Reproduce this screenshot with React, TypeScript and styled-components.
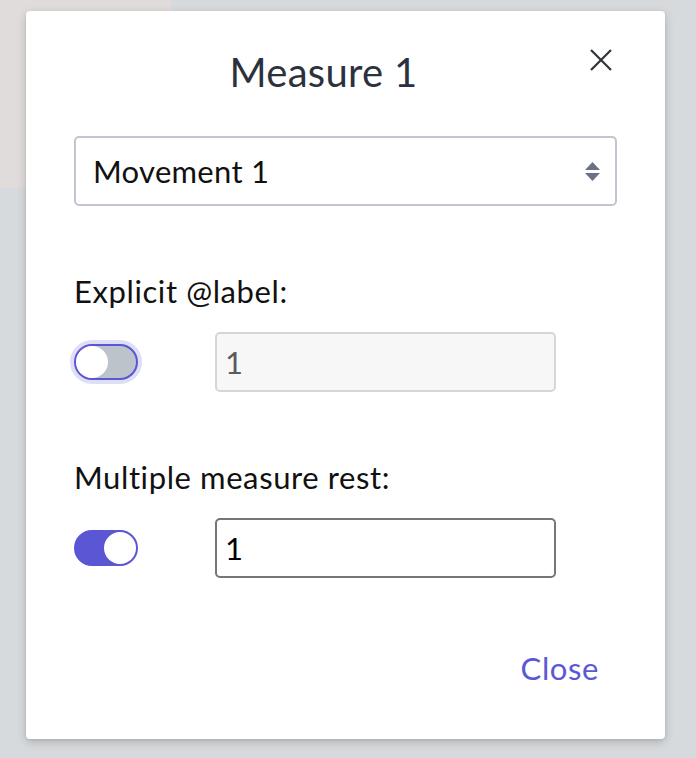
import React, { useState } from "react";
import styled, { createGlobalStyle } from "styled-components";

const GlobalStyle = createGlobalStyle`
  html, body {
    margin: 0;
    padding: 0;
  }
  body {
    background: #d6dadd;
    font-family: Lato, "Noto Sans", sans-serif;
  }
`;

const Page = styled.div`
  position: relative;
  width: 696px;
  height: 758px;
  overflow: hidden;
  background: #d6dadd;
`;

const BehindPanel = styled.div`
  width: 171px;
  height: 187px;
  background: #e0dcdb;
  border-right: 1px solid #e6d6d6;
  border-bottom: 1px solid #e6d6d6;
`;

const Modal = styled.div`
  position: absolute;
  left: 26px;
  top: 11px;
  width: 639px;
  height: 728px;
  box-sizing: border-box;
  padding: 0 48px;
  background: #fff;
  border-radius: 4px;
  box-shadow: 0 3px 10px rgba(0, 0, 0, 0.18), 0 1px 3px rgba(0, 0, 0, 0.08);
  display: flex;
  flex-direction: column;
`;

const Header = styled.div`
  display: flex;
  align-items: flex-start;
  margin-top: 37px;
`;

const Title = styled.h2`
  flex: 1;
  margin: 0;
  text-align: center;
  font-size: 40px;
  line-height: 48px;
  font-weight: 400;
  letter-spacing: 0.3px;
  color: #2c323d;
`;

const CloseIcon = styled.button`
  width: 44px;
  height: 34px;
  margin-top: -5px;
  padding: 0 0 0 16px;
  border: none;
  background: none;
  display: flex;
  align-items: center;
  justify-content: flex-start;
  cursor: pointer;
`;

const SelectBox = styled.div`
  margin-top: 40px;
  height: 70px;
  box-sizing: border-box;
  border: 2px solid #c2c5ce;
  border-radius: 5px;
  display: flex;
  align-items: center;
  justify-content: space-between;
  padding: 0 14px 0 17px;
  font-size: 31px;
  letter-spacing: 0.3px;
  color: #111;
`;

const Label = styled.div`
  margin-top: 67px;
  font-size: 31px;
  line-height: 36px;
  letter-spacing: 0.6px;
  color: #111;
`;

const Row = styled.div`
  margin-top: 23px;
  display: flex;
  align-items: center;
  gap: 77px;
`;

const Toggle = styled.div<{ $on: boolean; $focused?: boolean }>`
  position: relative;
  width: 64px;
  height: 36px;
  box-sizing: border-box;
  border-radius: 18px;
  border: 2px solid #5a56d4;
  background: ${({ $on }) => ($on ? "#5a56d4" : "#bdc3cb")};
  box-shadow: ${({ $focused }) => ($focused ? "0 0 0 4px #dedef6" : "none")};
  flex-shrink: 0;
  cursor: pointer;
`;

const Knob = styled.span<{ $on: boolean }>`
  position: absolute;
  top: 0;
  left: ${({ $on }) => ($on ? "28px" : "0")};
  width: 32px;
  height: 32px;
  border-radius: 50%;
  background: #fff;
`;

const TextInput = styled.input<{ $disabled?: boolean }>`
  width: 341px;
  height: 60px;
  box-sizing: border-box;
  border-radius: 5px;
  border: 2px solid ${({ $disabled }) => ($disabled ? "#d6d6d6" : "#767676")};
  background: ${({ $disabled }) => ($disabled ? "#f7f7f7" : "#fff")};
  color: ${({ $disabled }) => ($disabled ? "#5a5a5a" : "#000")};
  font-family: Lato, "Noto Sans", sans-serif;
  font-size: 31px;
  padding: 0 8px;
  outline: none;
`;

const Footer = styled.div`
  margin-top: auto;
  margin-bottom: 53px;
  display: flex;
  justify-content: flex-end;
`;

const TextButton = styled.button`
  border: none;
  background: none;
  padding: 0 18px 0 0;
  font-family: Lato, "Noto Sans", sans-serif;
  font-size: 31px;
  line-height: 36px;
  letter-spacing: 0.6px;
  color: #5b58d6;
  cursor: pointer;
`;

function XIcon() {
  return (
    <svg width="24" height="24" viewBox="0 0 24 24">
      <path d="M2 2 L22 22 M22 2 L2 22" stroke="#30343b" strokeWidth="2.2" />
    </svg>
  );
}

function SortArrows() {
  return (
    <svg width="17" height="21" viewBox="0 0 17 21">
      <path d="M8.5 1 L16 9 H1 Z M1 12 H16 L8.5 20 Z" fill="#6a7088" />
    </svg>
  );
}

export default function App() {
  const [labelOn, setLabelOn] = useState(false);
  const [restOn, setRestOn] = useState(true);
  return (
    <Page>
      <GlobalStyle />
      <BehindPanel />
      <Modal>
        <Header>
          <Title>Measure 1</Title>
          <CloseIcon aria-label="close">
            <XIcon />
          </CloseIcon>
        </Header>
        <SelectBox>
          <span>Movement 1</span>
          <SortArrows />
        </SelectBox>
        <Label>Explicit @label:</Label>
        <Row>
          <Toggle $on={labelOn} $focused onClick={() => setLabelOn(!labelOn)}>
            <Knob $on={labelOn} />
          </Toggle>
          <TextInput $disabled disabled value="1" readOnly />
        </Row>
        <Label>Multiple measure rest:</Label>
        <Row>
          <Toggle $on={restOn} onClick={() => setRestOn(!restOn)}>
            <Knob $on={restOn} />
          </Toggle>
          <TextInput value="1" readOnly />
        </Row>
        <Footer>
          <TextButton>Close</TextButton>
        </Footer>
      </Modal>
    </Page>
  );
}
